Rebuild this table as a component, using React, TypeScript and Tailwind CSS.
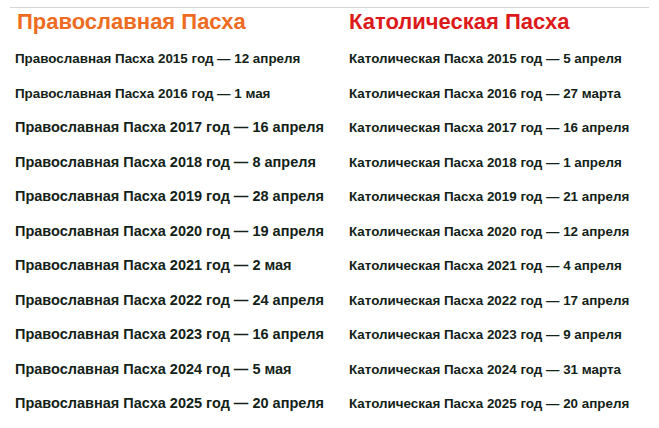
import React from 'react';

interface EasterRow {
  year: number;
  orthodox: string;
  catholic: string;
  big: boolean;
}

const rows: EasterRow[] = [
  { year: 2015, orthodox: '12 апреля', catholic: '5 апреля', big: false },
  { year: 2016, orthodox: '1 мая', catholic: '27 марта', big: false },
  { year: 2017, orthodox: '16 апреля', catholic: '16 апреля', big: true },
  { year: 2018, orthodox: '8 апреля', catholic: '1 апреля', big: true },
  { year: 2019, orthodox: '28 апреля', catholic: '21 апреля', big: true },
  { year: 2020, orthodox: '19 апреля', catholic: '12 апреля', big: true },
  { year: 2021, orthodox: '2 мая', catholic: '4 апреля', big: true },
  { year: 2022, orthodox: '24 апреля', catholic: '17 апреля', big: true },
  { year: 2023, orthodox: '16 апреля', catholic: '9 апреля', big: true },
  { year: 2024, orthodox: '5 мая', catholic: '31 марта', big: true },
  { year: 2025, orthodox: '20 апреля', catholic: '20 апреля', big: true },
];

const App: React.FC = () => {
  return (
    <div className="w-[659px] h-[428px] bg-white overflow-hidden font-['Liberation_Sans',Arial,sans-serif]">
      <div className="mx-[10px] mt-[7px] border-t border-[#d4d4d4]">
        {/* Заголовки */}
        <div className="grid grid-cols-[339px_1fr] h-[27px] mb-[7px] items-center">
          <h2 className="pl-[7px] text-[22px] font-bold text-[#ee6b22] leading-none">
            Православная Пасха
          </h2>
          <h2 className="text-[22px] font-bold text-[#dc1a1a] leading-none">
            Католическая Пасха
          </h2>
        </div>

        {/* Даты */}
        {rows.map(row => (
          <div key={row.year} className="grid grid-cols-[339px_1fr] h-[34.5px] items-center text-[#132217] font-bold">
            <div className={row.big ? 'pl-[5px] text-[14.5px]' : 'pl-[5px] text-[13.4px]'}>
              Православная Пасха {row.year} год — {row.orthodox}
            </div>
            <div className="text-[13.4px]">
              Католическая Пасха {row.year} год — {row.catholic}
            </div>
          </div>
        ))}
      </div>
    </div>
  );
};

export default App;
